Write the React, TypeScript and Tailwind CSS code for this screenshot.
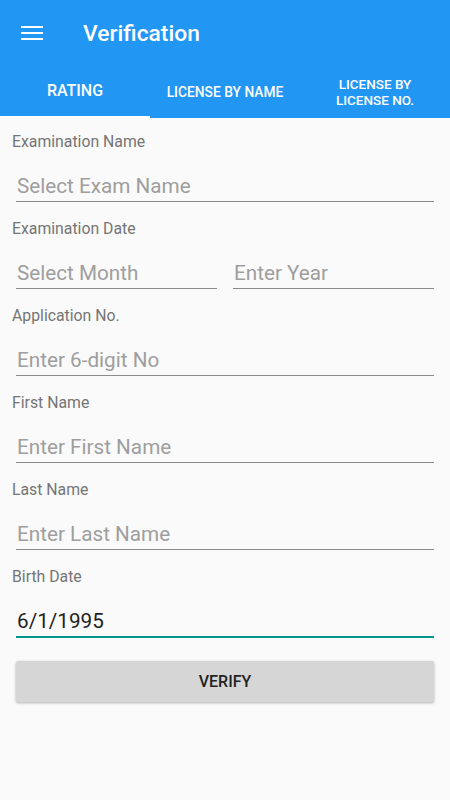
function Input({ placeholder, value, focused, className }: any) {
  return (
    <div
      className={`mt-[23px] flex pb-[3px] pl-[1px] ${
        focused ? "border-b-2 border-[#009688]" : "border-b border-[#8a8a8a]"
      } ${className ?? ""}`}
    >
      <span
        className={`text-[20.7px] leading-[24px] ${
          value ? "text-[#222222]" : "text-[#9e9e9e]"
        }`}
      >
        {value ?? placeholder}
      </span>
    </div>
  );
}

function Label({ children }: any) {
  return (
    <div className="h-[18px] pl-[12px] text-[15.8px] leading-[18px] text-[#757575]">
      {children}
    </div>
  );
}

export default function App() {
  const fields = [
    ["Application No.", "Enter 6-digit No"],
    ["First Name", "Enter First Name"],
    ["Last Name", "Enter Last Name"],
  ];

  return (
    <div
      className="w-[450px] h-[800px] bg-[#fafafa] flex flex-col"
      style={{ fontFamily: "Roboto, 'Liberation Sans', sans-serif" }}
    >
      <div className="bg-[#2196f3]">
        <div className="h-[66px] flex items-center">
          <div className="w-[65px] flex justify-center">
            <svg width="22" height="16" viewBox="0 0 22 16" fill="white" className="-ml-[1px] -mt-[1px]">
              <rect x="0" y="1" width="22" height="2" />
              <rect x="0" y="7" width="22" height="2" />
              <rect x="0" y="13" width="22" height="2" />
            </svg>
          </div>
          <div className="pl-[18px] pt-[2px] text-[22.8px] font-medium text-white">Verification</div>
        </div>
        <div className="h-[52px] flex text-white font-medium">
          <div className="w-[150px] flex flex-col">
            <div className="flex-1 flex items-center justify-center text-[16px]">RATING</div>
            <div className="h-[2px] bg-white" />
          </div>
          <div className="w-[150px] flex items-center justify-center text-[13.8px]">
            LICENSE BY NAME
          </div>
          <div className="w-[150px] flex items-center justify-center text-center text-[13.5px] leading-[16px]">
            LICENSE BY
            <br />
            LICENSE NO.
          </div>
        </div>
      </div>

      <div className="flex flex-col pt-[15px]">
        <div className="flex flex-col mb-[18px]">
          <Label>Examination Name</Label>
          <div className="px-[16px]">
            <Input placeholder="Select Exam Name" />
          </div>
        </div>

        <div className="flex flex-col mb-[18px]">
          <Label>Examination Date</Label>
          <div className="px-[16px] flex gap-[16px]">
            <Input placeholder="Select Month" className="w-[201px]" />
            <Input placeholder="Enter Year" className="flex-1" />
          </div>
        </div>

        {fields.map(([l, p]) => (
          <div key={l} className="flex flex-col mb-[18px]">
            <Label>{l}</Label>
            <div className="px-[16px]">
              <Input placeholder={p} />
            </div>
          </div>
        ))}

        <div className="flex flex-col">
          <Label>Birth Date</Label>
          <div className="px-[16px]">
            <Input value="6/1/1995" focused />
          </div>
        </div>

        <div className="px-[16px] pt-[23px]">
          <button className="w-full h-[41px] bg-[#d6d6d6] rounded-[2px] shadow-[0_1px_3px_rgba(0,0,0,0.3)] text-[16px] font-medium text-[#222222]">
            VERIFY
          </button>
        </div>
      </div>
    </div>
  );
}
